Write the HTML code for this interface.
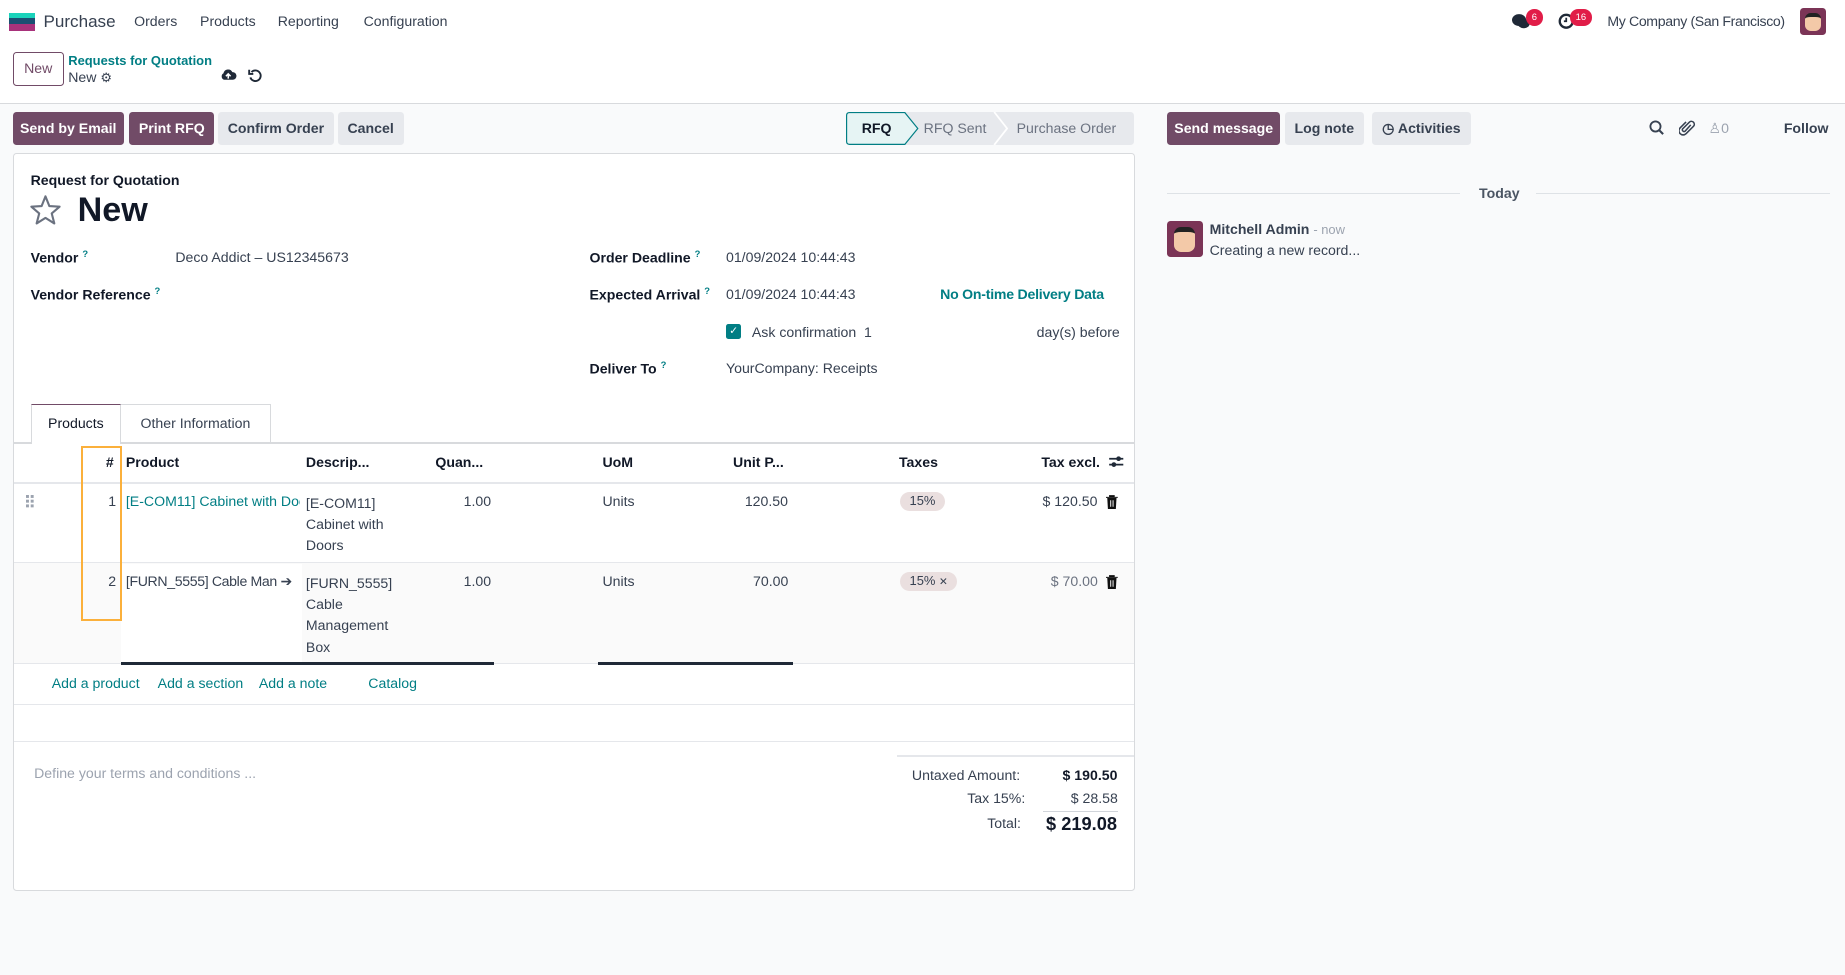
<!DOCTYPE html>
<html><head><meta charset="utf-8"><style>
*{box-sizing:border-box;margin:0;padding:0}
html,body{width:1845px;height:975px;overflow:hidden;background:#f9fafb}
#w{zoom:1.17666;position:relative;width:1568px;height:829px;font-family:"Liberation Sans",sans-serif;font-size:12px;color:#374151}
.a{position:absolute;white-space:nowrap}
.b{font-weight:bold;color:#111827}
.t{color:#017e84}
.btn{position:absolute;height:28px;line-height:28px;border-radius:3px;text-align:center;font-weight:bold;font-size:12px}
.p{background:#714b67;color:#fff}
.g{background:#e7e9ed;color:#374151}
.q{font-size:8px;color:#017e84;vertical-align:super;font-weight:bold}
.pill{position:absolute;background:#eadfdf;border-radius:10px;height:16px;line-height:16px;padding:0 8px;font-size:11px}
</style></head><body><div id="w">
<div class="a" style="left:0;top:0;width:1568px;height:88px;background:#fff;border-bottom:1px solid #d8dadd"></div>
<div class="a" style="left:8px;top:11px;width:22px;height:5px;background:#1ad3bb"></div>
<div class="a" style="left:8px;top:15px;width:22px;height:5px;background:#1b4f72"></div>
<div class="a" style="left:8px;top:20px;width:22px;height:6px;background:#a8327b"></div>
<div class="a" style="left:37px;top:10px;font-size:14.5px;color:#374151">Purchase</div>
<div class="a" style="left:114px;top:11px;font-size:12px">Orders</div>
<div class="a" style="left:170px;top:11px;font-size:12px">Products</div>
<div class="a" style="left:236px;top:11px;font-size:12px">Reporting</div>
<div class="a" style="left:309px;top:11px;font-size:12px">Configuration</div>
<svg class="a" style="left:1285px;top:11px" width="16" height="14"><ellipse cx="6" cy="6" rx="6" ry="5" fill="#1f2937"/><ellipse cx="10" cy="9" rx="5" ry="4" fill="#1f2937"/></svg>
<div class="a" style="left:1297px;top:8px;width:14px;height:14px;background:#e11d48;border-radius:7px;color:#fff;font-size:8px;text-align:center;line-height:14px">6</div>
<svg class="a" style="left:1324px;top:11px" width="14" height="14"><circle cx="7" cy="7" r="5.5" fill="none" stroke="#1f2937" stroke-width="2"/><path d="M7 4V7H5" stroke="#1f2937" stroke-width="1.5" fill="none"/></svg>
<div class="a" style="left:1334px;top:8px;width:19px;height:14px;background:#e11d48;border-radius:7px;color:#fff;font-size:8px;text-align:center;line-height:14px">16</div>
<div class="a" style="left:1366px;top:11px;font-size:12px;letter-spacing:-0.3px">My Company (San Francisco)</div>
<div class="a" style="left:1530px;top:7px;width:22px;height:23px;background:#7b3456;border-radius:3px"><div style="margin:4px 4px;width:14px;height:15px;background:#f3c9a8;border-radius:5px;border-top:4px solid #222"></div></div>

<div class="a" style="left:11px;top:44px;width:43px;height:29px;border:1px solid #714b67;border-radius:3px;color:#714b67;text-align:center;line-height:27px;font-size:12px">New</div>
<div class="a t" style="left:58px;top:45px;font-size:11px;font-weight:bold">Requests for Quotation</div>
<div class="a" style="left:58px;top:59px;font-size:12px">New <span style="font-size:11px">⚙</span></div>
<svg class="a" style="left:187px;top:58px" width="14" height="11"><path d="M3.5 10 A3 3 0 0 1 3 4.5 A4 4 0 0 1 10.5 3.5 A3 3 0 0 1 11 10Z" fill="#1f2937"/><path d="M7 9V5M5 7L7 5L9 7" stroke="#fff" stroke-width="1.3" fill="none"/></svg>
<svg class="a" style="left:211px;top:58px" width="12" height="12"><path d="M3 3.5 A4.5 4.5 0 1 1 2 8" fill="none" stroke="#1f2937" stroke-width="1.6"/><path d="M1 1.5V5H4.5" fill="none" stroke="#1f2937" stroke-width="1.6"/></svg>

<div class="btn p" style="left:11px;top:95px;width:94px">Send by Email</div>
<div class="btn p" style="left:110px;top:95px;width:72px">Print RFQ</div>
<div class="btn g" style="left:185px;top:95px;width:99px">Confirm Order</div>
<div class="btn g" style="left:287px;top:95px;width:56px">Cancel</div>
<div class="a" style="left:719px;top:95px;width:245px;height:28px;background:#e7e9ed;border-radius:3px"></div>
<svg class="a" style="left:719px;top:95px" width="62" height="28"><path d="M3 0.5 L50 0.5 L61 14 L50 27.5 L3 27.5 Q0.5 27.5 0.5 25 L0.5 3 Q0.5 0.5 3 0.5Z" fill="#e6f4f4" stroke="#017e84"/></svg>
<div class="a b" style="left:719px;top:102px;width:52px;text-align:center">RFQ</div>
<div class="a" style="left:785px;top:102px;color:#6b7280;font-size:12px">RFQ Sent</div>
<svg class="a" style="left:844px;top:95px" width="14" height="28"><path d="M1 0 L12 14 L1 28" fill="none" stroke="#fff" stroke-width="1.5"/></svg>
<div class="a" style="left:864px;top:102px;color:#6b7280;font-size:12px">Purchase Order</div>

<div class="a" style="left:11px;top:130px;width:954px;height:627px;background:#fff;border:1px solid #d8dadd;border-radius:3px"></div>
<div class="a b" style="left:26px;top:146px;font-size:12px">Request for Quotation</div>
<svg class="a" style="left:25px;top:165px" width="28" height="27"><path d="M14 2 L17.3 10.3 L26 10.8 L19.3 16.5 L21.5 25 L14 20.3 L6.5 25 L8.7 16.5 L2 10.8 L10.7 10.3Z" fill="none" stroke="#6b7280" stroke-width="1.8" stroke-linejoin="round"/></svg>
<div class="a b" style="left:66px;top:162px;font-size:29px">New</div>
<div class="a b" style="left:26px;top:211px">Vendor <span class="q">?</span></div>
<div class="a" style="left:149px;top:212px">Deco Addict – US12345673</div>
<div class="a b" style="left:26px;top:242px">Vendor Reference <span class="q">?</span></div>
<div class="a b" style="left:501px;top:211px">Order Deadline <span class="q">?</span></div>
<div class="a" style="left:617px;top:212px">01/09/2024 10:44:43</div>
<div class="a b" style="left:501px;top:242px">Expected Arrival <span class="q">?</span></div>
<div class="a" style="left:617px;top:243px">01/09/2024 10:44:43</div>
<div class="a t" style="left:799px;top:243px;font-weight:bold;letter-spacing:-0.2px">No On-time Delivery Data</div>
<div class="a" style="left:617px;top:275px;width:13px;height:13px;background:#017e84;border-radius:2px;color:#fff;font-size:9px;text-align:center;line-height:13px">✓</div>
<div class="a" style="left:639px;top:275px">Ask confirmation &nbsp;1</div>
<div class="a" style="left:881px;top:275px">day(s) before</div>
<div class="a b" style="left:501px;top:305px">Deliver To <span class="q">?</span></div>
<div class="a" style="left:617px;top:306px">YourCompany: Receipts</div>

<div class="a" style="left:12px;top:376px;width:952px;height:1px;background:#d8dadd"></div>
<div class="a" style="left:26px;top:343px;width:77px;height:34px;background:#fff;border:1px solid #d8dadd;border-top:1px solid #714b67;border-bottom:none;text-align:center;line-height:32px;color:#111827">Products</div>
<div class="a" style="left:103px;top:343px;width:127px;height:33px;border:1px solid #d8dadd;border-left:none;border-bottom:none;text-align:center;line-height:32px">Other Information</div>
<div class="a" style="left:12px;top:410px;width:952px;height:1px;background:#e5e7eb"></div>
<div class="a b" style="left:90px;top:386px">#</div>
<div class="a b" style="left:107px;top:386px">Product</div>
<div class="a b" style="left:260px;top:386px">Descrip...</div>
<div class="a b" style="left:370px;top:386px">Quan...</div>
<div class="a b" style="left:512px;top:386px">UoM</div>
<div class="a b" style="left:623px;top:386px">Unit P...</div>
<div class="a b" style="left:764px;top:386px">Taxes</div>
<div class="a b" style="left:885px;top:386px">Tax excl.</div>
<svg class="a" style="left:942px;top:386px" width="14" height="13"><path d="M1 4H13M1 9H13" stroke="#1f2937" stroke-width="1.5"/><circle cx="9" cy="4" r="2" fill="#1f2937"/><circle cx="5" cy="9" r="2" fill="#1f2937"/></svg>

<svg class="a" style="left:22px;top:421px" width="8" height="12"><g fill="#9ca3af"><rect x="0" y="0" width="2.5" height="2.5"/><rect x="4" y="0" width="2.5" height="2.5"/><rect x="0" y="4" width="2.5" height="2.5"/><rect x="4" y="4" width="2.5" height="2.5"/><rect x="0" y="8" width="2.5" height="2.5"/><rect x="4" y="8" width="2.5" height="2.5"/></g></svg>
<div class="a" style="left:92px;top:419px">1</div>
<div class="a t" style="left:107px;top:419px;width:148px;overflow:hidden">[E-COM11] Cabinet with Doors</div>
<div class="a" style="left:260px;top:419px;line-height:18px">[E-COM11]<br>Cabinet with<br>Doors</div>
<div class="a" style="left:394px;top:419px">1.00</div>
<div class="a" style="left:512px;top:419px">Units</div>
<div class="a" style="left:633px;top:419px">120.50</div>
<div class="pill" style="left:765px;top:418px">15%</div>
<div class="a" style="left:886px;top:419px">$ 120.50</div>
<svg class="a" style="left:940px;top:421px" width="10" height="12"><path d="M0 2H10M3 2V0.5H7V2M1.5 3H8.5L8 11.5H2Z" fill="#111" stroke="#111" stroke-width="0.8"/><path d="M4 4.5V10M6 4.5V10" stroke="#fff" stroke-width="0.8"/></svg>
<div class="a" style="left:12px;top:478px;width:952px;height:86px;background:#fafafa;border-top:1px solid #e5e7eb;border-bottom:1px solid #e5e7eb"></div>
<div class="a" style="left:103px;top:479px;width:154px;height:84px;background:#fff"></div>
<div class="a" style="left:92px;top:487px">2</div>
<div class="a" style="left:107px;top:487px;letter-spacing:-0.3px">[FURN_5555] Cable Man ➔</div>
<div class="a" style="left:260px;top:487px;line-height:18px">[FURN_5555]<br>Cable<br>Management<br>Box</div>
<div class="a" style="left:394px;top:487px">1.00</div>
<div class="a" style="left:512px;top:487px">Units</div>
<div class="a" style="left:640px;top:487px">70.00</div>
<div class="pill" style="left:765px;top:486px">15% <span style="font-size:9px">✕</span></div>
<div class="a" style="left:893px;top:487px;color:#6b7280">$ 70.00</div>
<svg class="a" style="left:940px;top:489px" width="10" height="12"><path d="M0 2H10M3 2V0.5H7V2M1.5 3H8.5L8 11.5H2Z" fill="#111" stroke="#111" stroke-width="0.8"/><path d="M4 4.5V10M6 4.5V10" stroke="#fff" stroke-width="0.8"/></svg>
<div class="a" style="left:103px;top:563px;width:317px;height:2px;background:#1f2937"></div>
<div class="a" style="left:508px;top:563px;width:166px;height:2px;background:#1f2937"></div>
<div class="a" style="left:69px;top:379px;width:35px;height:149px;border:2px solid #fbb03b"></div>

<div class="a t" style="left:44px;top:574px">Add a product</div>
<div class="a t" style="left:134px;top:574px">Add a section</div>
<div class="a t" style="left:220px;top:574px">Add a note</div>
<div class="a t" style="left:313px;top:574px">Catalog</div>
<div class="a" style="left:12px;top:598px;width:952px;height:1px;background:#e5e7eb"></div>
<div class="a" style="left:12px;top:630px;width:952px;height:1px;background:#e5e7eb"></div>
<div class="a" style="left:29px;top:650px;color:#9ca3af">Define your terms and conditions ...</div>
<div class="a" style="left:762px;top:642px;width:202px;height:1px;background:#e5e7eb"></div>
<div class="a" style="left:775px;top:652px">Untaxed Amount:</div>
<div class="a b" style="left:903px;top:652px">$ 190.50</div>
<div class="a" style="left:822px;top:671px">Tax 15%:</div>
<div class="a" style="left:910px;top:671px">$ 28.58</div>
<div class="a" style="left:886px;top:689px;width:64px;height:1px;background:#d1d5db"></div>
<div class="a" style="left:839px;top:693px">Total:</div>
<div class="a b" style="left:889px;top:691px;font-size:15.5px">$ 219.08</div>

<div class="btn p" style="left:992px;top:95px;width:96px">Send message</div>
<div class="btn g" style="left:1092px;top:95px;width:67px">Log note</div>
<div class="btn g" style="left:1166px;top:95px;width:84px">◷ Activities</div>
<svg class="a" style="left:1401px;top:102px" width="13" height="13"><circle cx="5.5" cy="5.5" r="4.3" fill="none" stroke="#374151" stroke-width="1.6"/><path d="M8.5 8.5L12 12" stroke="#374151" stroke-width="1.8"/></svg>
<svg class="a" style="left:1427px;top:101px" width="14" height="15"><path d="M10 5L5 10.5A1.5 1.5 0 0 1 3 8.5L9 2.5A2.5 2.5 0 0 1 12.5 6L6 12.5A3.5 3.5 0 0 1 1 7.5L6 2.5" fill="none" stroke="#374151" stroke-width="1.3"/></svg>
<div class="a" style="left:1452px;top:102px;color:#9ca3af">♙0</div>
<div class="a b" style="left:1516px;top:102px;color:#374151">Follow</div>
<div class="a" style="left:992px;top:164px;width:249px;height:1px;background:#dee2e6"></div>
<div class="a b" style="left:1257px;top:157px;color:#4b5563">Today</div>
<div class="a" style="left:1305px;top:164px;width:250px;height:1px;background:#dee2e6"></div>
<div class="a" style="left:992px;top:188px;width:30px;height:30px;background:#7b3456;border-radius:3px"><div style="margin:5px 6px;width:18px;height:21px;background:#f3c9a8;border-radius:6px;border-top:5px solid #222"></div></div>
<div class="a b" style="left:1028px;top:188px;color:#374151">Mitchell Admin <span style="font-weight:normal;color:#9ca3af;font-size:11px">- now</span></div>
<div class="a" style="left:1028px;top:206px">Creating a new record...</div>
</div></body></html>
